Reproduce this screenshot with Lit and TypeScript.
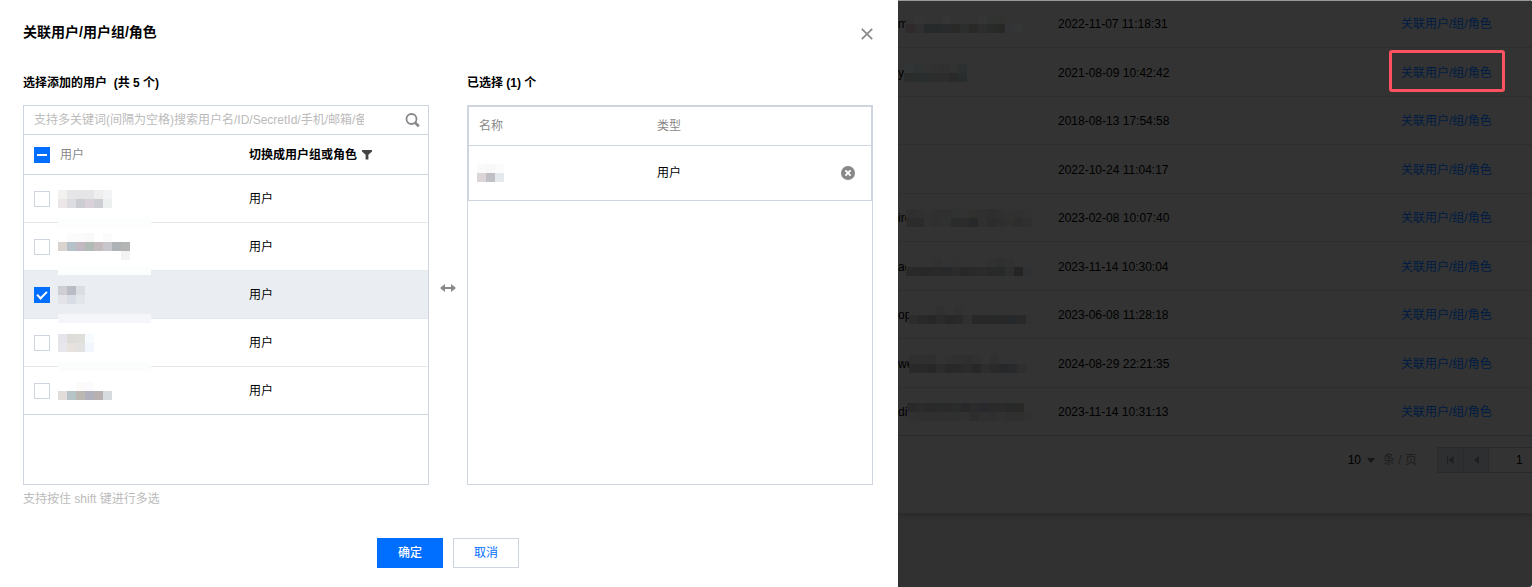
import { LitElement, html, css, svg, nothing } from "lit";
import { customElement, property } from "lit/decorators.js";
import { styleMap } from "lit/directives/style-map.js";

/** Grid of 9px tiles that hides a private name. "-" leaves a tile empty. */
@customElement("name-mask")
class NameMask extends LitElement {
  @property({ attribute: false }) rows: string[] = [];
  static styles = css`
    :host { display: block; flex: none; }
    svg { display: block; }
  `;
  render() {
    const grid = this.rows.map((r) => r.split(" "));
    const cols = Math.max(0, ...grid.map((r) => r.length));
    return html`<svg width=${cols * 9} height=${grid.length * 9} shape-rendering="crispEdges" aria-hidden="true">
      ${grid.map((row, y) => row.map((c, x) => c === "-" ? nothing
        : svg`<rect x=${x * 9} y=${y * 9} width="9" height="9" fill=${"#" + c}></rect>`))}
    </svg>`;
  }
}

interface User { mask: string[]; checked?: boolean; patch?: string }
const USERS: User[] = [
  { mask: ["f3f1ef e6e5e8 e5e5e8 e5e5e7 eeeeef f1f3f5", "ebe6e8 dddce0 cbcdd2 d9d1da cdced3 ecf0ef"], patch: "fcfefd" },
  { mask: ["- fbfbfb fbfbfb f9f9f9 - fbfbfb - -", "d9d4cf b4c1c8 c2b8c2 b2bab5 c3bbbc c7c6cc adb3b5 b2b5b1", "- - - - - - - f3f3f3"], patch: "fcfefd" },
  { mask: ["cfced4 b9bcc5 dadee3", "e3e2e8 d8dce5 e2e6eb"], checked: true, patch: "f5f6f9" },
  { mask: ["e5e4ea dedcd8 dfdeda f6fbff", "e7e6ed e8e2de e2e1e2 f2f6fc"], patch: "fbfdfc" },
  { mask: ["- - fcfbfa fbfafc - -", "e2dcdb b6c4c7 bbb8b1 b1b1be b8b0b1 d5dbde"] },
];

interface Policy { name: string; cut: number; time: string; mask: string[] }
const POLICIES: Policy[] = [
  { name: "m", cut: 8, time: "2022-11-07 11:18:31", mask: ["- 353535 - - 353535 - - - 353535 313232 323331 -", "2f2b2c 303030 262a2b 272a2b 292a2b 292927 2c2e2e 292a27 2d2d2d 292b2b 282926 323436 343535"] },
  { name: "yu", cut: 6, time: "2021-08-09 10:42:42", mask: ["313535 303333 323232 313131 303030 313333 2d3030", "292c2a 292d2c 292d2d 2b2d2c 2b2c2b 292929 2a2d2e"] },
  { name: "", cut: 8, time: "2018-08-13 17:54:58", mask: [] },
  { name: "", cut: 8, time: "2022-10-24 11:04:17", mask: [] },
  { name: "ire", cut: 8, time: "2023-02-08 10:07:40", mask: ["2f2f2f 303030 323131 303030 2f2f2f 303231 323232 30302f 2f2f2f 2e2e2e 303030 313131 303030 323232", "2b2b2b 2b2b2b 303131 302f2f 303131 2a2b2b 2b2b2b 272829 303030 2c2c2c 2d2e2e 30302f 2d2d2d 2f2f2f"] },
  { name: "ac", cut: 8, time: "2023-11-14 10:30:04", mask: ["- - - 313131 - 323232 - - - 313131 2e2f2f 313131 -", "292929 282828 272828 292929 26282a 2b2b2b 282828 2a2a2a 2b2b2b 2a2929 282929 2d2e2e 242425 303132"] },
  { name: "opi", cut: 11, time: "2023-06-08 11:28:18", mask: ["- - - 313131 - 313131 - - - - - - -", "2c2c2c 292929 272727 2b2b2b 272727 292929 303030 292828 282828 272828 292828 26292b 292929 313232"] },
  { name: "we", cut: 11, time: "2024-08-29 22:21:35", mask: ["2f2f2f 303030 2f2f2f - 313131 303030 2f2f2f 313131 - 303030 - - -", "292929 2a2929 272727 2c2c2c 282828 292929 2b2b2b 272727 2d2d2d 2a2a2a 272829 282a2c 2f2f2f 323333"] },
  { name: "din", cut: 9, time: "2023-11-14 10:31:13", mask: ["29292b 2b2b2b 2a2929 292a2a 2b2a2a 2a2b2b 28282b 2b2b2b 28292c 2b2a2a 2a2a2a 272828 292928", "313131 303030 303030 2f2f2f 303030 303030 313131 2d2d2d 303030 2f2f2f 313131 2f2f2f 303030 323232"] },
];

const base = css`
  * { box-sizing: border-box; }
  table { border-collapse: separate; border-spacing: 0; table-layout: fixed; width: 100%; }
  th, td { padding: 0; text-align: left; font-weight: 400; }
  button { font: inherit; padding: 0; border: 0; background: none; cursor: pointer; }
  svg { display: block; flex: none; }
`;

@customElement("user-picker")
class UserPicker extends LitElement {
  static styles = [base, css`
    :host { display: block; background: #fff; color: #000; padding: 20px 25px 19px 23px; }
    .head { display: flex; align-items: center; justify-content: space-between; height: 28px; }
    h1 { margin: 0; font-size: 14px; line-height: 24px; align-self: flex-start; }
    .panes { display: grid; grid-template-columns: minmax(0, 1fr) 38px minmax(0, 1fr); margin-top: 25px; }
    h2 { margin: 0 0 12px; font-size: 12px; line-height: 20px; white-space: pre; }
    .box { height: 380px; border: 1px solid #cfd5de; }
    .swap { display: flex; align-items: center; justify-content: center; padding-bottom: 6px; }
    .search { display: flex; align-items: center; justify-content: space-between; height: 29px; padding-right: 8px; border-bottom: 1px solid #cfd5de; }
    .search input { flex: none; width: 340px; height: 28px; padding: 0 0 0 10px; border: 0; outline: 0; font: inherit; color: #000; background: none; }
    .search input::placeholder { color: #bbb; opacity: 1; }
    .first { width: 225px; }
    .users th { height: 40px; border-bottom: 1px solid #cfd5de; }
    .users td { height: 48px; border-bottom: 1px solid #e5e8ed; position: relative; }
    .users tr.last td { border-bottom-color: #cfd5de; }
    .users tr.on td { background: #eaedf2; }
    .pick { display: flex; align-items: center; gap: 8px; padding-left: 10px; }
    th .pick { gap: 10px; color: #888; }
    input[type="checkbox"] { appearance: none; margin: 0; width: 16px; height: 16px; flex: none; border: 1px solid #cfd5de; background: #fff; display: grid; place-items: center; }
    input[type="checkbox"]:checked, input[type="checkbox"]:indeterminate { border-color: #006eff; background: #006eff; }
    input[type="checkbox"]:indeterminate::after { content: ""; width: 10px; height: 2px; background: #fff; }
    input[type="checkbox"]:checked::after { content: ""; box-sizing: border-box; width: 10px; height: 6px; border: solid #fff; border-width: 0 0 2px 2px; transform: translateY(-1px) rotate(-45deg); }
    .patch { position: absolute; left: 34px; bottom: -5px; width: 93px; height: 9px; z-index: 1; }
    .filter { display: flex; align-items: center; gap: 5px; font-weight: 700; color: #000; }
    .hint { margin: 4px 0 0; line-height: 20px; color: #bbb; }
    .chosen { border: 1px solid #cfd5de; }
    .chosen th { height: 39px; color: #888; border-bottom: 1px solid #cfd5de; }
    .chosen td { height: 54px; }
    .chosen .name { width: 188px; padding-left: 10px; }
    .chosen td.name { padding-left: 8px; }
    .chosen .act { width: 48px; }
    .chosen .act button { display: block; margin-left: 18px; }
    .foot { display: flex; justify-content: center; gap: 10px; margin-top: 29px; }
    .foot button { width: 66px; height: 30px; border: 1px solid #cfd5de; color: #006eff; background: #fff; }
    .foot .ok { border-color: #006eff; background: #006eff; color: #fff; font-weight: 500; }
  `];

  render() {
    return html`
      <div class="head">
        <h1>关联用户/用户组/角色</h1>
        <button aria-label="关闭">
          <svg width="12" height="12" viewBox="0 0 12 12"><path d="M.8.8l10.4 10.4M11.2.8L.8 11.2" stroke="#888" stroke-width="1.7"/></svg>
        </button>
      </div>
      <div class="panes">
        <section>
          <h2>选择添加的用户  (共 5 个)</h2>
          <div class="box">
            <div class="search">
              <input type="text" aria-label="搜索用户" placeholder="支持多关键词(间隔为空格)搜索用户名/ID/SecretId/手机/邮箱/备注">
              <button aria-label="搜索">
                <svg width="15" height="15" viewBox="0 0 15 15" fill="none" stroke="#888"><circle cx="6.5" cy="6" r="5" stroke-width="1.8"/><path d="M10 9.500l3.800 3.800" stroke-width="2.6"/></svg>
              </button>
            </div>
            <table class="users">
              <thead><tr>
                <th class="first"><label class="pick"><input type="checkbox" .indeterminate=${true}>用户</label></th>
                <th><button class="filter">切换成用户组或角色
                  <svg width="10" height="10" viewBox="0 0 10 10"><path d="M0 0h10v1.500L6.400 4.800v4.700H3.600V4.800L0 1.500z" fill="#444"/></svg>
                </button></th>
              </tr></thead>
              <tbody>
                ${USERS.map((u, i) => html`
                  <tr class="${u.checked ? "on" : ""} ${i === USERS.length - 1 ? "last" : ""}">
                    <td><label class="pick"><input type="checkbox" aria-label="选择用户" .checked=${!!u.checked}><name-mask .rows=${u.mask}></name-mask></label>
                      ${u.patch ? html`<span class="patch" style=${styleMap({ background: "#" + u.patch })}></span>` : nothing}</td>
                    <td>用户</td>
                  </tr>`)}
              </tbody>
            </table>
          </div>
          <p class="hint">支持按住 shift 键进行多选</p>
        </section>
        <div class="swap">
          <svg width="16" height="8" viewBox="0 0 16 8"><path d="M0 4l5-4v3h6V0l5 4-5 4V5H5v3z" fill="#888"/></svg>
        </div>
        <section>
          <h2>已选择 (1) 个</h2>
          <div class="box">
            <table class="chosen">
              <thead><tr><th class="name">名称</th><th>类型</th><th class="act"></th></tr></thead>
              <tbody><tr>
                <td class="name"><name-mask .rows=${["fbfafb f8f8f9 fbfbfb", "dcd5d8 bfbfc6 e4e9ec"]}></name-mask></td>
                <td>用户</td>
                <td class="act"><button aria-label="移除">
                  <svg width="14" height="14" viewBox="0 0 14 14"><circle cx="7" cy="7" r="7" fill="#888"/><path d="M4.4 4.4l5.2 5.2M9.6 4.4L4.4 9.6" stroke="#fff" stroke-width="2"/></svg>
                </button></td>
              </tr></tbody>
            </table>
          </div>
        </section>
      </div>
      <div class="foot"><button class="ok">确定</button><button>取消</button></div>
    `;
  }
}

@customElement("policy-page")
class PolicyPage extends LitElement {
  static styles = [base, css`
    :host { display: block; min-width: 0; overflow: hidden; background: #313131; color: #000; border-radius: 0 3px 3px 0; }
    .card { background: #333; border-bottom: 1px solid #2b2b2b; box-shadow: 0 2px 4px #2b2b2b; padding-bottom: 40px; border-top: 1px solid #989b9a; }
    td { height: 48px; border-bottom: 1px solid #2e2e2f; }
    tr:nth-child(even) td { height: 49px; padding-top: 2px; }
    tr:first-child td { height: 47px; }
    tr:last-child td { border-bottom-color: #292a2b; }
    .who { width: 160px; }
    .name { display: flex; align-items: center; }
    .text { flex: none; white-space: nowrap; }
    name-mask { position: relative; background: #333; }
    .link { width: 131px; }
    a { position: relative; color: #001c42; text-decoration: none; white-space: nowrap; }
    .marked::after { content: ""; position: absolute; inset: -16px -13px -12px -12px; border: 3px solid #ff5260; border-radius: 3px; }
    .pager { display: flex; justify-content: flex-end; align-items: center; margin-top: 11px; height: 26px; color: #1e1e1e; }
    .size { display: flex; align-items: center; gap: 6px; color: #000; }
    .unit { margin: 0 20px 0 8px; color: #1d1d1d; }
    .nav { width: 26px; height: 26px; display: grid; place-items: center; background: #2d2f31; border: 1px solid #292a2c; border-right: 0; }
    .nav + .nav { width: 25px; }
    .pager input { width: 44px; height: 26px; padding: 0 0 0 27px; border: 1px solid #292a2c; border-right: 0; background: #333; color: #000; font: inherit; border-radius: 0; outline: 0; }
  `];

  render() {
    return html`
      <div class="card">
        <table><tbody>
          ${POLICIES.map((p, i) => html`<tr>
            <td class="who"><div class="name">
              <span class="text" style=${styleMap({ width: p.cut + "px" })}>${p.name}</span>
              <name-mask .rows=${p.mask}></name-mask>
            </div></td>
            <td>${p.time}</td>
            <td class="link"><a href="#" class=${i === 1 ? "marked" : ""}>关联用户/组/角色</a></td>
          </tr>`)}
        </tbody></table>
        <div class="pager">
          <button class="size">10 <svg width="8" height="5" viewBox="0 0 8 5"><path d="M0 0h8L4 5z" fill="#161616"/></svg></button>
          <span class="unit">条 / 页</span>
          <button class="nav" aria-label="首页"><svg width="7" height="8" viewBox="0 0 7 8"><path d="M0 0h1v8H0zM6.500 0v8L1.500 4z" fill="#1e1f20"/></svg></button>
          <button class="nav" aria-label="上一页"><svg width="5" height="8" viewBox="0 0 5 8"><path d="M5 0v8L0 4z" fill="#1e1f20"/></svg></button>
          <input type="text" aria-label="页码" value="1">
        </div>
      </div>
    `;
  }
}

@customElement("app-root")
class AppRoot extends LitElement {
  static styles = css`
    :host {
      display: grid; grid-template-columns: minmax(0, 898fr) minmax(0, 634fr); min-height: 100vh; background: #fff;
      font: 12px/18px "Liberation Sans", "Noto Sans CJK SC", sans-serif;
    }
  `;
  render() {
    return html`<user-picker role="dialog"></user-picker><policy-page></policy-page>`;
  }
}
